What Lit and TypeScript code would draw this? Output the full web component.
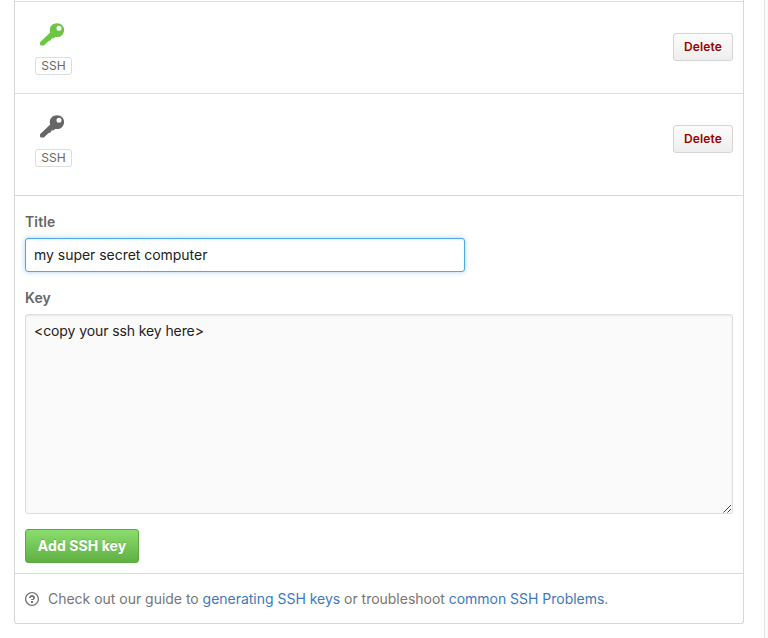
import { LitElement, html, css } from "lit";
import { customElement, property } from "lit/decorators.js";

@customElement("ssh-key-row")
class SshKeyRow extends LitElement {
  @property({ type: Boolean, reflect: true }) active = false;

  static styles = css`
    :host {
      display: flex;
      justify-content: space-between;
      align-items: flex-start;
      box-sizing: border-box;
      padding: 21px 10px 0 20px;
      border-top: 1px solid #ddd;
      color: #666;
    }
    :host([active]) .key { color: #6cc644; }
    .kind { display: flex; flex-direction: column; }
    .key { display: block; width: 26px; height: 24px; margin-left: 4px; color: #666; }
    .badge {
      box-sizing: border-box;
      width: 37px;
      height: 18px;
      margin-top: 10px;
      border: 1px solid #ddd;
      border-radius: 3px;
      font-size: 12px;
      line-height: 16px;
      text-align: center;
      color: #666;
    }
    .delete {
      box-sizing: border-box;
      width: 60px;
      height: 28px;
      margin-top: 10px;
      padding: 0;
      border: 1px solid #d5d5d5;
      border-radius: 3px;
      background: linear-gradient(#fcfcfc, #eee);
      font: 600 12px/26px Inter, sans-serif;
      letter-spacing: 0.1px;
      color: #900;
    }
  `;

  render() {
    return html`
      <div class="kind">
        <svg class="key" viewBox="0 0 26 24" fill="currentColor">
          <path fill-rule="evenodd" d="M18 .2c4.100 0 7.100 2.900 7.100 6.700 0 4.100-3.200 7.200-7.100 7.200-.8 0-1.300 0-1.900-.2l-1.300 1.300-2.300.3-1 1.900-1.800.5-4.300 4.200c-.4.400-.8.500-1.400.500H2.800C1.600 22.600 1 22 1 20.900v-1c0-.5.2-.9.500-1.200l9.700-9.100c-.3-.8-.4-1.700-.4-2.600C10.800 3.100 14 .2 18 .2zM20 2.700a2.500 2.500 0 1 0 0 5 2.500 2.500 0 0 0 0-5z"/>
        </svg>
        <span class="badge">SSH</span>
      </div>
      <button class="delete">Delete</button>
    `;
  }
}

@customElement("app-root")
class AppRoot extends LitElement {
  static styles = css`
    :host {
      display: block;
      box-sizing: border-box;
      height: 638px;
      overflow: hidden;
      background: #fafafa;
      font: 14px/20px Inter, sans-serif;
      color: #666;
    }
    .page {
      box-sizing: border-box;
      width: 765px;
      height: 638px;
      padding-left: 14px;
      border-right: 1px solid #e5e5e5;
      background: #fff;
    }
    .panel {
      box-sizing: border-box;
      width: 730px;
      height: 624px;
      padding-top: 1px;
      border: 1px solid #d8d8d8;
      border-top: 0;
      border-radius: 0 0 3px 3px;
    }
    .first { height: 92px; }
    .second { height: 102px; }
    .form {
      display: flex;
      flex-direction: column;
      align-items: flex-start;
      box-sizing: border-box;
      height: 378px;
      padding: 16px 10px 0;
      border-top: 1px solid #d8d8d8;
    }
    label { font-weight: 600; letter-spacing: 0.12px; }
    .title, .text {
      box-sizing: border-box;
      margin: 0;
      border-radius: 3px;
      outline: none;
      font: 14px/20px Inter, sans-serif;
      color: #222;
    }
    .title {
      width: 440px;
      height: 34px;
      margin: 6px 0 16px;
      padding: 0 8px 2px;
      border: 1px solid #51a7e8;
      background: #fff;
      box-shadow: inset 0 1px 2px rgba(0,0,0,.075), 0 0 5px rgba(81,167,232,.5);
      letter-spacing: -0.03px;
    }
    .area { position: relative; width: 708px; height: 200px; margin-top: 6px; }
    .text {
      display: block;
      width: 100%;
      height: 100%;
      padding: 6px 8px;
      border: 1px solid #ddd;
      background: #fafafa;
      box-shadow: inset 0 1px 2px rgba(0,0,0,.075);
      resize: none;
      letter-spacing: -0.1px;
    }
    .grip { position: absolute; right: 1px; bottom: 1px; width: 9px; height: 9px; }
    .add {
      box-sizing: border-box;
      width: 114px;
      height: 34px;
      margin-top: 15px;
      padding: 0;
      border: 1px solid #5ca941;
      border-radius: 3px;
      background: linear-gradient(#8add6d, #60b044);
      font: 700 14px/32px Inter, sans-serif;
      letter-spacing: 0.08px;
      color: #fff;
      text-shadow: 0 -1px 0 rgba(0,0,0,.15);
    }
    .help {
      display: flex;
      height: 49px;
      padding: 0 10px;
      align-items: center;
      border-top: 1px solid #d8d8d8;
      color: #767676;
      white-space: pre;
      letter-spacing: -0.02px;
    }
    .question { width: 14px; height: 16px; margin-right: 9px; }
    a { color: #4078c0; text-decoration: none; }
  `;

  render() {
    return html`
      <main class="page">
        <section class="panel">
          <ssh-key-row class="first" active></ssh-key-row>
          <ssh-key-row class="second"></ssh-key-row>
          <div class="form">
            <label for="title">Title</label>
            <input id="title" class="title" .value=${"my super secret computer"} />
            <label for="key">Key</label>
            <div class="area">
              <textarea id="key" class="text" .value=${"<copy your ssh key here>"}></textarea>
              <svg class="grip" viewBox="0 0 9 9" stroke="#444" fill="none">
                <path d="M.5 8.500 8 1M4.500 8.500 8 5"/>
              </svg>
            </div>
            <button class="add">Add SSH key</button>
          </div>
          <div class="help">
            <svg class="question" viewBox="0 0 14 16" fill="currentColor">
              <path fill-rule="evenodd" d="M6 10h2v2H6v-2zm4-3.500C10 8.640 8 9 8 9H6c0-.55.45-1 1-1h.5c.28 0 .5-.22.5-.5v-1c0-.28-.22-.5-.5-.5h-1c-.28 0-.5.22-.5.5V7H4c0-1.500 1.500-3 3-3s3 1 3 2.500zM7 2.300c3.140 0 5.700 2.560 5.700 5.700s-2.560 5.700-5.700 5.700A5.710 5.710 0 0 1 1.300 8c0-3.140 2.560-5.700 5.700-5.700zM7 1C3.140 1 0 4.140 0 8s3.140 7 7 7 7-3.140 7-7-3.140-7-7-7z"/>
            </svg>
            <span>Check out our guide to <a>generating SSH keys</a> or troubleshoot <a>common SSH Problems</a>.</span>
          </div>
        </section>
      </main>
    `;
  }
}
